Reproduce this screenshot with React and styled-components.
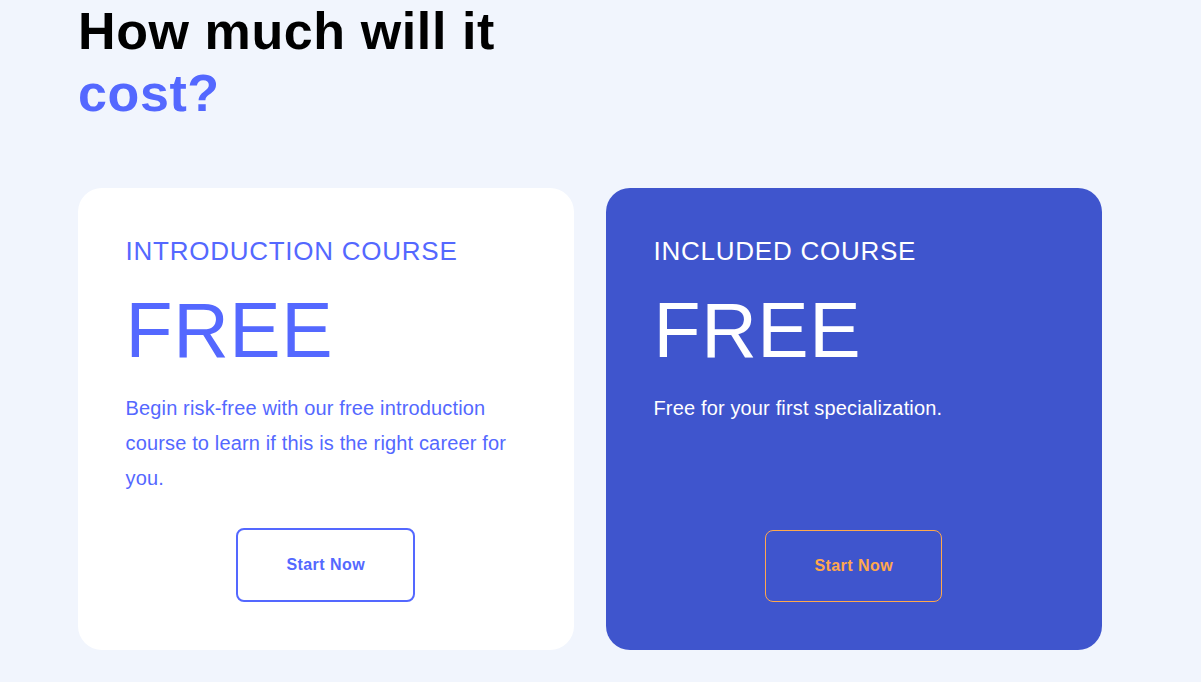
import React from 'react';
import styled, { createGlobalStyle } from 'styled-components';

const COLORS = {
  page: '#f1f5fd',
  brand: '#5468ff',
  brandDark: '#3f55cd',
  accent: '#ffa84c',
  ink: '#000000',
  white: '#ffffff',
};

const GlobalStyle = createGlobalStyle`
  html, body {
    margin: 0;
    padding: 0;
    background: ${COLORS.page};
    font-family: "Liberation Sans", Arial, Helvetica, sans-serif;
  }
  * { box-sizing: border-box; }
`;

const Section = styled.section`
  width: 1024px;
  margin-left: 78px;
  padding-bottom: 32px;
`;

const Heading = styled.h2`
  margin: 0;
  font-size: 52px;
  line-height: 62.4px;
  font-weight: 700;
  letter-spacing: 0.6px;
  color: ${COLORS.ink};
`;

const Highlight = styled.span`
  display: block;
  color: ${COLORS.brand};
`;

const CardGrid = styled.div`
  display: grid;
  grid-template-columns: 1fr 1fr;
  gap: 32px;
  margin-top: 63px;
`;

const Card = styled.article`
  display: flex;
  flex-direction: column;
  padding: 48px 48px 48px 47.5px;
  border-radius: 24px;
  background: ${(p) => (p.$featured ? COLORS.brandDark : COLORS.white)};
  color: ${(p) => (p.$featured ? COLORS.white : COLORS.brand)};
`;

const CardLabel = styled.h3`
  margin: 0;
  font-size: 26px;
  line-height: 31px;
  font-weight: 400;
  letter-spacing: 0.75px;
  text-transform: uppercase;
`;

const Price = styled.div`
  margin-top: 18px;
  font-size: 77px;
  line-height: 91px;
  font-weight: 400;
  letter-spacing: 0.6px;
`;

const Description = styled.p`
  margin: 15px 0 0;
  font-size: 20px;
  line-height: 35px;
  letter-spacing: 0.15px;
`;

const Action = styled.div`
  display: flex;
  justify-content: center;
  margin-top: auto;
  padding-top: 32px;
`;

const StartButton = styled.button`
  font-family: inherit;
  font-size: 16px;
  line-height: 22px;
  font-weight: 700;
  letter-spacing: 0.45px;
  background: transparent;
  cursor: pointer;
  border-radius: 8px;
  padding: 24px 48px;
  color: ${(p) => (p.$featured ? COLORS.accent : COLORS.brand)};
  border: ${(p) => (p.$featured ? `1px solid ${COLORS.accent}` : `2px solid ${COLORS.brand}`)};
`;

const plans = [
  {
    label: 'Introduction course',
    price: 'FREE',
    text: 'Begin risk-free with our free introduction course to learn if this is the right career for you.',
    featured: false,
  },
  {
    label: 'Included course',
    price: 'FREE',
    text: 'Free for your first specialization.',
    featured: true,
  },
];

export default function App() {
  return (
    <>
      <GlobalStyle />
      <Section>
        <Heading>
          How much will it
          <Highlight>cost?</Highlight>
        </Heading>
        <CardGrid>
          {plans.map((plan) => (
            <Card key={plan.label} $featured={plan.featured}>
              <CardLabel>{plan.label}</CardLabel>
              <Price>{plan.price}</Price>
              <Description>{plan.text}</Description>
              <Action>
                <StartButton $featured={plan.featured}>Start Now</StartButton>
              </Action>
            </Card>
          ))}
        </CardGrid>
      </Section>
    </>
  );
}
